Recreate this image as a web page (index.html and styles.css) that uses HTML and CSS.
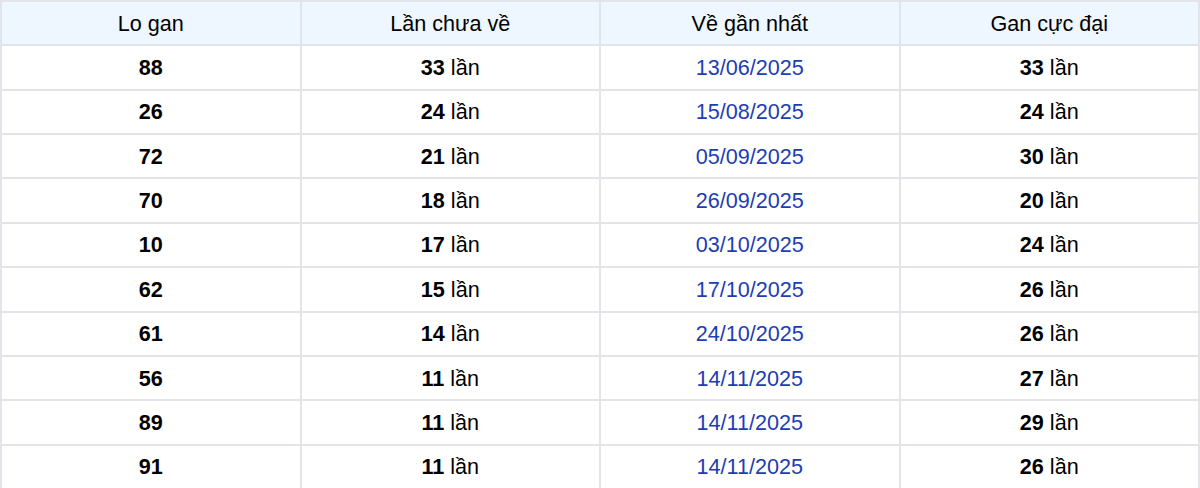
FILE: index.html
```html
<!DOCTYPE html>
<html lang="vi">
<head>
<meta charset="utf-8">
<link rel="stylesheet" href="styles.css">
</head>
<body>
<table class="gan">
<thead>
<tr><th>Lo gan</th><th>Lần chưa về</th><th>Về gần nhất</th><th>Gan cực đại</th></tr>
</thead>
<tbody>
<tr><td><b>88</b></td><td><b>33</b> lần</td><td class="date">13/06/2025</td><td><b>33</b> lần</td></tr>
<tr><td><b>26</b></td><td><b>24</b> lần</td><td class="date">15/08/2025</td><td><b>24</b> lần</td></tr>
<tr><td><b>72</b></td><td><b>21</b> lần</td><td class="date">05/09/2025</td><td><b>30</b> lần</td></tr>
<tr><td><b>70</b></td><td><b>18</b> lần</td><td class="date">26/09/2025</td><td><b>20</b> lần</td></tr>
<tr><td><b>10</b></td><td><b>17</b> lần</td><td class="date">03/10/2025</td><td><b>24</b> lần</td></tr>
<tr><td><b>62</b></td><td><b>15</b> lần</td><td class="date">17/10/2025</td><td><b>26</b> lần</td></tr>
<tr><td><b>61</b></td><td><b>14</b> lần</td><td class="date">24/10/2025</td><td><b>26</b> lần</td></tr>
<tr><td><b>56</b></td><td><b>11</b> lần</td><td class="date">14/11/2025</td><td><b>27</b> lần</td></tr>
<tr><td><b>89</b></td><td><b>11</b> lần</td><td class="date">14/11/2025</td><td><b>29</b> lần</td></tr>
<tr><td><b>91</b></td><td><b>11</b> lần</td><td class="date">14/11/2025</td><td><b>26</b> lần</td></tr>
</tbody>
</table>
</body>
</html>
```
FILE: styles.css
```css
html, body {
  margin: 0;
  padding: 0;
  background: #ffffff;
}
.gan {
  width: 1200px;
  border-collapse: collapse;
  table-layout: fixed;
  font-family: "Liberation Sans", Arial, sans-serif;
  font-size: 21.6px;
  color: #000000;
}
.gan tr {
  height: 44.36px;
}
.gan th, .gan td {
  border: 2px solid #e3e4ea;
  text-align: center;
  vertical-align: middle;
  padding: 0;
  line-height: 25px;
}
.gan th {
  font-weight: normal;
  background: #eef6ff;
}
.gan b {
  font-weight: bold;
}
.gan .date {
  color: #1d3db4;
}
```
